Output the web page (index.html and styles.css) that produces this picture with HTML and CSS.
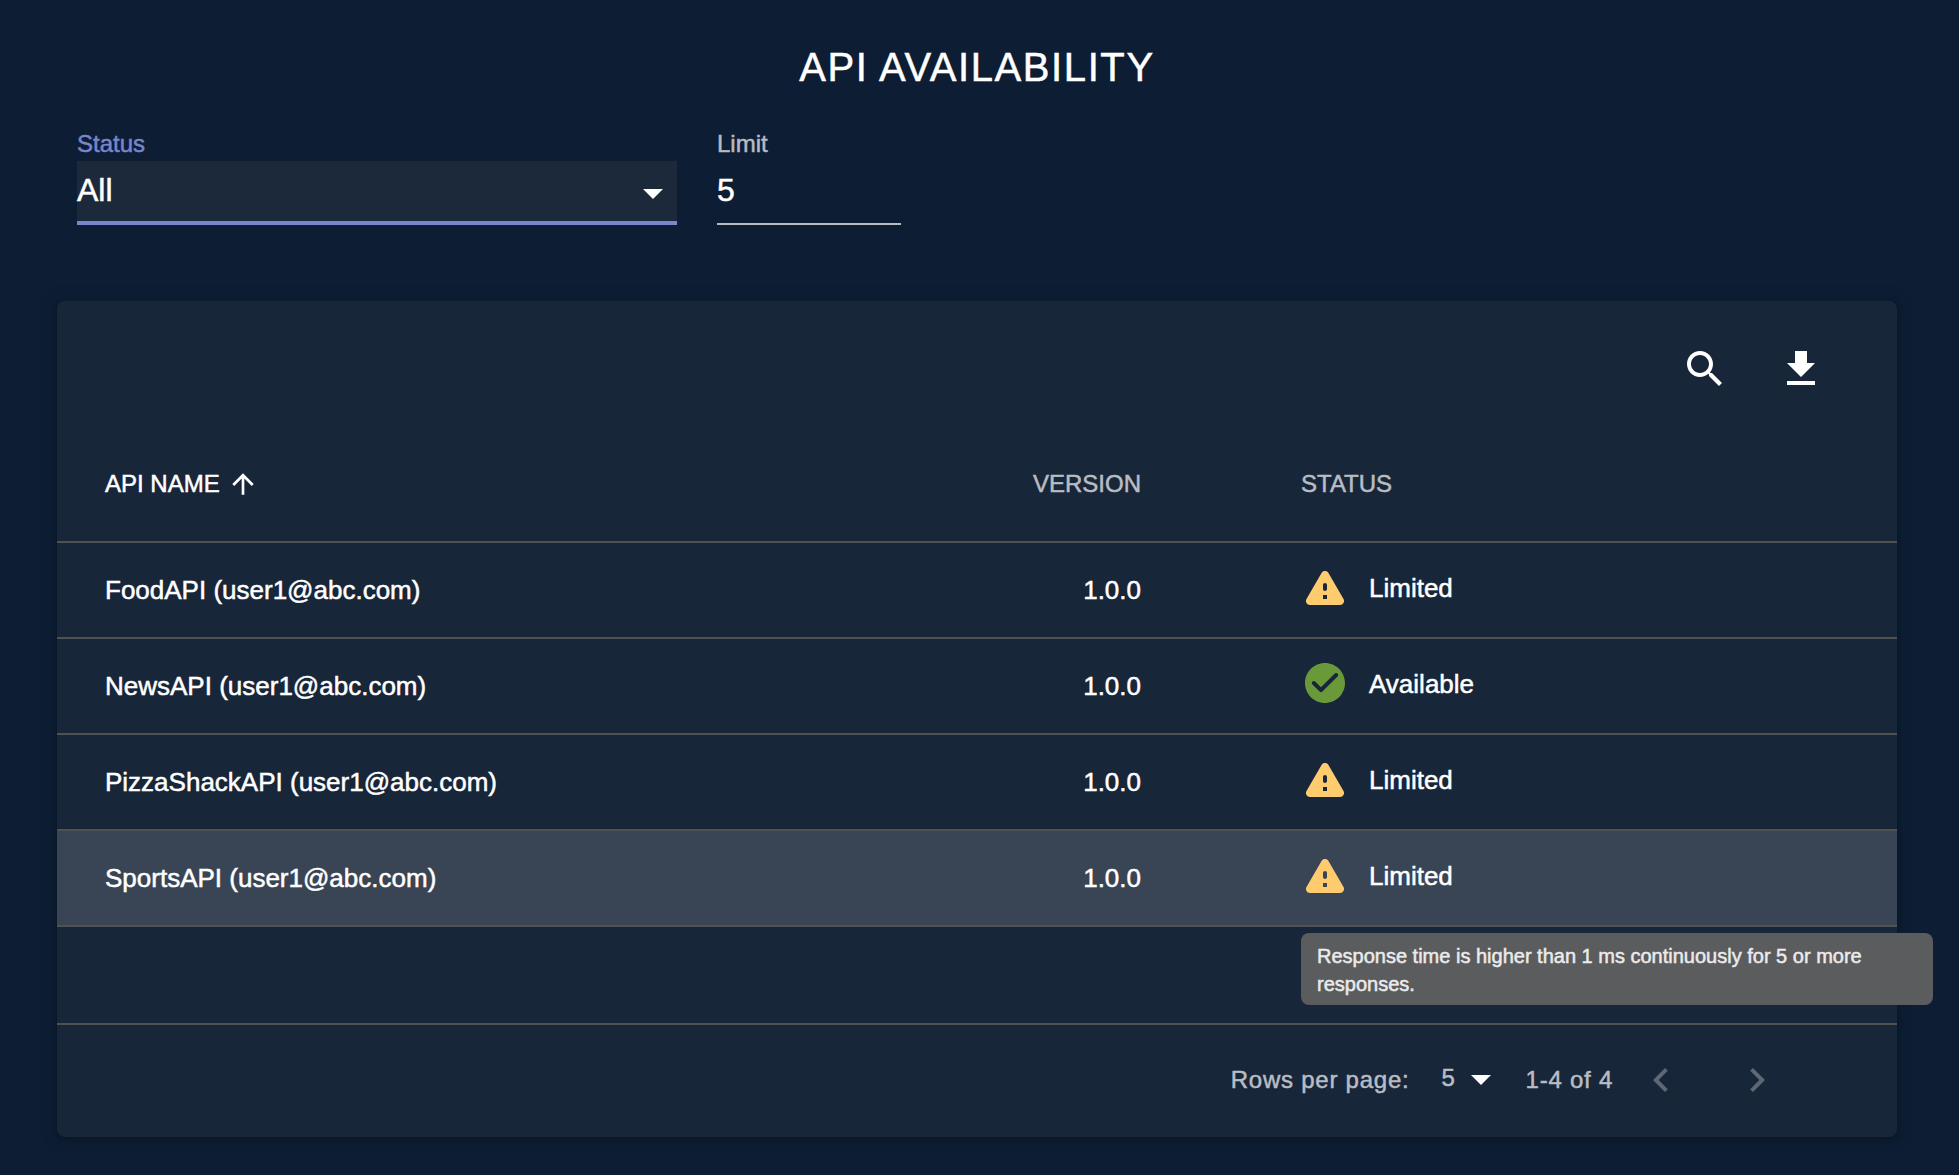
FILE: index.html
```html
<!DOCTYPE html>
<html lang="en">
<head>
<meta charset="utf-8">
<title>API Availability</title>
<link rel="stylesheet" href="styles.css">
</head>
<body>
<svg class="defs" width="0" height="0">
  <symbol id="warning" viewBox="0 0 24 24"><path d="M4.470 21h15.060c1.540 0 2.500-1.670 1.730-3L13.730 4.990c-.77-1.330-2.690-1.330-3.460 0L2.740 18c-.77 1.330.19 3 1.730 3zM12 14c-.55 0-1-.45-1-1v-2c0-.55.45-1 1-1s1 .45 1 1v2c0 .55-.45 1-1 1zm1 4h-2v-2h2v2z"/></symbol>
  <symbol id="check" viewBox="0 0 24 24"><path d="M12 2C6.480 2 2 6.480 2 12s4.480 10 10 10 10-4.480 10-10S17.520 2 12 2zM9.290 16.290L5.700 12.700c-.39-.39-.39-1.020 0-1.410.39-.39 1.020-.39 1.410 0L10 14.170l6.880-6.880c.39-.39 1.020-.39 1.410 0 .39.39.39 1.020 0 1.410l-7.590 7.590c-.38.39-1.020.39-1.410 0z"/></symbol>
</svg>
<main class="page">
  <h1 class="title">API AVAILABILITY</h1>
  <form class="filters">
    <div class="field field-status">
      <label class="label">Status</label>
      <div class="select"><span>All</span><svg class="caret" viewBox="0 0 24 24"><path d="M7 10l5 5 5-5z"/></svg></div>
    </div>
    <div class="field field-limit">
      <label class="label">Limit</label>
      <div class="input">5</div>
    </div>
  </form>
  <section class="card">
    <div class="toolbar">
      <svg class="tool" viewBox="0 0 24 24"><path d="M15.500 14h-.79l-.28-.27C15.410 12.590 16 11.110 16 9.500 16 5.910 13.090 3 9.500 3S3 5.910 3 9.500 5.910 16 9.500 16c1.610 0 3.090-.59 4.230-1.570l.27.28v.79l5 4.990L20.490 19l-4.990-5zm-6 0C7.010 14 5 11.990 5 9.500S7.010 5 9.500 5 14 7.010 14 9.500 11.990 14 9.500 14z"/></svg>
      <svg class="tool" viewBox="0 0 24 24"><path d="M19 9h-4V3H9v6H5l7 7 7-7zM5 18v2h14v-2H5z"/></svg>
    </div>
    <div class="row head">
      <div class="name sorted"><span>API NAME</span><svg class="sort" viewBox="0 0 24 24"><path d="M4 12l1.410 1.410L11 7.830V20h2V7.830l5.580 5.590L20 12l-8-8-8 8z"/></svg></div>
      <div class="version">VERSION</div>
      <div class="status">STATUS</div>
    </div>
    <div class="row">
      <div class="name">FoodAPI (user1@abc.com)</div>
      <div class="version">1.0.0</div>
      <div class="status"><svg class="state warn"><use href="#warning"/></svg><span>Limited</span></div>
    </div>
    <div class="row">
      <div class="name">NewsAPI (user1@abc.com)</div>
      <div class="version">1.0.0</div>
      <div class="status"><svg class="state ok"><use href="#check"/></svg><span>Available</span></div>
    </div>
    <div class="row">
      <div class="name">PizzaShackAPI (user1@abc.com)</div>
      <div class="version">1.0.0</div>
      <div class="status"><svg class="state warn"><use href="#warning"/></svg><span>Limited</span></div>
    </div>
    <div class="row hover">
      <div class="name">SportsAPI (user1@abc.com)</div>
      <div class="version">1.0.0</div>
      <div class="status"><svg class="state warn"><use href="#warning"/></svg><span>Limited</span></div>
      <div class="tooltip" role="tooltip">Response time is higher than 1 ms continuously for 5 or more responses.</div>
    </div>
    <div class="row blank"></div>
    <footer class="pager">
      <span class="per-page">Rows per page:</span>
      <span class="count">5</span>
      <svg class="caret" viewBox="0 0 24 24"><path d="M7 10l5 5 5-5z"/></svg>
      <span class="range">1-4 of 4</span>
      <svg class="nav" viewBox="0 0 24 24"><path d="M15.410 7.410L14 6l-6 6 6 6 1.410-1.410L10.830 12z"/></svg>
      <svg class="nav" viewBox="0 0 24 24"><path d="M8.590 16.590L13.170 12 8.590 7.410 10 6l6 6-6 6z"/></svg>
    </footer>
  </section>
</main>
</body>
</html>
```
FILE: styles.css
```css
* { box-sizing: border-box; }

body {
  margin: 0;
  background: #0d1d33;
  color: #fff;
  font: 24px/28px "Liberation Sans", Arial, sans-serif;
  -webkit-text-stroke: 0.5px currentColor;
}

svg { display: block; fill: currentColor; stroke: none; flex: none; }
.defs { display: none; }

.page { height: 1175px; padding: 0 62px 0 57px; overflow: hidden; }

.title {
  margin: 0;
  padding-top: 43px;
  font-size: 40px;
  line-height: 48px;
  font-weight: 400;
  letter-spacing: 1.600px;
  text-align: center;
}

/* Filters */
.filters { display: flex; gap: 40px; height: 210px; padding: 39px 20px 0; }
.label { display: block; height: 31px; color: #b6bbc2; }
.field-status { width: 600px; }
.field-status .label { color: #7986cb; }
.field-limit { width: 184px; }
.select, .input { height: 64px; font-size: 32px; line-height: 58px; }
.select {
  display: flex;
  justify-content: space-between;
  background: #1b293b;
  border-bottom: 4px solid #7986cb;
}
.input { border-bottom: 2px solid #b6bbc2; }
.caret { width: 48px; height: 48px; }
.select .caret { margin-top: 8px; }

/* Table card */
.card {
  height: 836px;
  background: #182639;
  border-radius: 8px;
  box-shadow: 0 0 14px rgba(12, 29, 42, .7), 0 2px 6px rgba(0, 0, 0, .2), 0 2px 2px rgba(0, 0, 0, .1);
}
.toolbar { display: flex; justify-content: flex-end; gap: 48px; height: 126px; padding: 44px 72px 0; }
.tool { width: 48px; height: 48px; }

.row {
  position: relative;
  display: grid;
  grid-template-columns: 924px 160px 1fr;
  align-items: center;
  height: 96px;
  border-bottom: 2px solid #515151;
  font-size: 26px;
}
.head { height: 116px; font-size: 24px; color: #b9bdc3; }
.blank { height: 98px; }
.hover { background: #394555; }

.name { padding-left: 48px; }
.sorted { display: flex; align-items: center; gap: 7px; color: #fff; }
.sort { width: 32px; height: 32px; }
.version { text-align: right; }
.status { display: flex; align-items: center; gap: 20px; padding-left: 160px; }
.row:not(.head) .status { padding-bottom: 6px; }
.status span { padding-top: 2px; }
.state { width: 48px; height: 48px; }
.warn { color: #fecb6e; }
.ok { color: #6a993a; }

.tooltip {
  position: absolute;
  left: 1244px;
  top: 102px;
  z-index: 1;
  width: 632px;
  height: 72px;
  padding: 9px 16px;
  border-radius: 8px;
  background: #5b5c5d;
  color: #ebebec;
  font-size: 20px;
}

/* Pagination */
.pager {
  display: flex;
  align-items: center;
  justify-content: flex-end;
  height: 110px;
  padding-right: 116px;
  color: #b9bdc3;
  letter-spacing: .76px;
}
.count { margin: -4px 1px 0 32px; }
.pager .caret { margin: -2px 21px 0 0; color: #fff; }
.nav { width: 48px; height: 48px; margin-left: 24px; color: #5d6875; }
.nav + .nav { margin-left: 48px; }
```
